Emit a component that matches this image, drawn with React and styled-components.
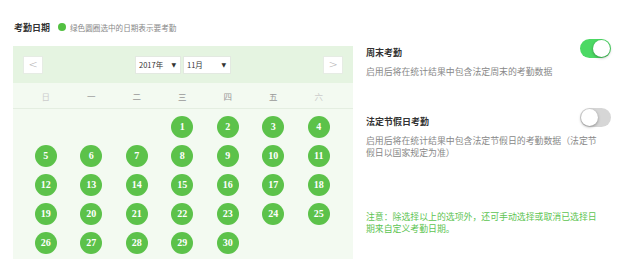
import React from 'react';
import styled, { createGlobalStyle } from 'styled-components';

const GlobalStyle = createGlobalStyle`
  body {
    margin: 0;
    background: #fff;
    font-family: "Noto Sans CJK SC", "Noto Sans", sans-serif;
  }
`;

const weekdays = ['日', '一', '二', '三', '四', '五', '六'];
const offset = 3;
const days = Array.from({ length: 30 }, (_, i) => i + 1);

function Toggle({ on }) {
  return (
    <Track $on={on}>
      <Knob $on={on} />
    </Track>
  );
}

function App() {
  return (
    <>
      <GlobalStyle />
      <Page>
        <LeftCol>
          <TitleRow>
            <Title>考勤日期</Title>
            <Dot />
            <Hint>绿色圆圈选中的日期表示要考勤</Hint>
          </TitleRow>
          <Calendar>
            <CalHeader>
              <NavBtn>&lt;</NavBtn>
              <Selects>
                <Select $w={46}>
                  <span>2017年</span>
                  <Caret>▼</Caret>
                </Select>
                <Select $w={48}>
                  <span>11月</span>
                  <Caret>▼</Caret>
                </Select>
              </Selects>
              <NavBtn>&gt;</NavBtn>
            </CalHeader>
            <WeekRow>
              {weekdays.map((w, i) => (
                <WeekCell key={w} $weekend={i === 0 || i === 6}>{w}</WeekCell>
              ))}
            </WeekRow>
            <DayGrid>
              {Array.from({ length: offset }).map((_, i) => <span key={'e' + i} />)}
              {days.map((d) => (
                <DayCell key={d}>
                  <Day>{d}</Day>
                </DayCell>
              ))}
            </DayGrid>
          </Calendar>
        </LeftCol>

        <RightCol>
          <Option>
            <OptionHead>
              <OptionTitle>周末考勤</OptionTitle>
              <Toggle on />
            </OptionHead>
            <Desc>启用后将在统计结果中包含法定周末的考勤数据</Desc>
          </Option>
          <Option $top={30}>
            <OptionHead>
              <OptionTitle>法定节假日考勤</OptionTitle>
              <Toggle />
            </OptionHead>
            <Desc>启用后将在统计结果中包含法定节假日的考勤数据（法定节假日以国家规定为准）</Desc>
          </Option>
          <Note>注意：除选择以上的选项外，还可手动选择或取消已选择日期来自定义考勤日期。</Note>
        </RightCol>
      </Page>
    </>
  );
}

const Page = styled.div`
  display: flex;
  align-items: flex-start;
  padding: 20px 11px 0 13px;
  width: 622px;
  box-sizing: border-box;
`;

const LeftCol = styled.div`
  width: 340px;
  flex-shrink: 0;
`;

const TitleRow = styled.div`
  display: flex;
  align-items: center;
  height: 14px;
  margin-bottom: 12px;
`;

const Title = styled.span`
  font-size: 9px;
  font-weight: bold;
  color: #333;
  margin-left: 1px;
`;

const Dot = styled.span`
  width: 8px;
  height: 8px;
  border-radius: 50%;
  background: #52c041;
  margin: 0 4px 0 8px;
`;

const Hint = styled.span`
  font-size: 7.6px;
  color: #888;
`;

const Calendar = styled.div`
  background: #f3faf1;
  padding-bottom: 2px;
`;

const CalHeader = styled.div`
  height: 37px;
  background: #e5f4e1;
  display: flex;
  align-items: center;
  justify-content: space-between;
  padding: 0 10px;
`;

const NavBtn = styled.div`
  width: 20px;
  height: 18px;
  background: #fff;
  border: 1px solid #e6ece4;
  box-sizing: border-box;
  display: flex;
  align-items: center;
  justify-content: center;
  color: #aaa;
  font-family: "DejaVu Sans", sans-serif;
  font-size: 11px;
  font-weight: 300;
`;

const Selects = styled.div`
  display: flex;
  gap: 2px;
`;

const Select = styled.div`
  width: ${(p) => p.$w}px;
  height: 18px;
  background: #fff;
  border: 1px solid #e3e9e1;
  box-sizing: border-box;
  display: flex;
  align-items: center;
  justify-content: space-between;
  padding: 0 4px 0 3px;
  font-size: 7.5px;
  color: #333;
`;

const Caret = styled.span`
  font-family: "DejaVu Sans", sans-serif;
  font-size: 6px;
  color: #333;
`;

const WeekRow = styled.div`
  display: grid;
  grid-template-columns: repeat(7, 45.5px);
  padding: 0 10px;
  height: 25px;
  align-items: center;
  border-bottom: 1px solid #e4eee1;
`;

const WeekCell = styled.span`
  text-align: center;
  font-size: 8.5px;
  color: ${(p) => (p.$weekend ? '#ccc' : '#999')};
`;

const DayGrid = styled.div`
  display: grid;
  grid-template-columns: repeat(7, 45.5px);
  grid-auto-rows: 29px;
  padding: 3px 10px 0;
`;

const DayCell = styled.div`
  display: flex;
  align-items: center;
  justify-content: center;
`;

const Day = styled.span`
  width: 22px;
  height: 22px;
  border-radius: 50%;
  background: #5cc24a;
  color: #fff;
  display: flex;
  align-items: center;
  justify-content: center;
  font-family: "Liberation Serif", serif;
  font-weight: bold;
  font-size: 10px;
`;

const RightCol = styled.div`
  margin-left: 13px;
  padding-top: 19px;
  flex: 1;
`;

const Option = styled.div`
  margin-top: ${(p) => p.$top || 0}px;
`;

const OptionHead = styled.div`
  display: flex;
  justify-content: space-between;
  align-items: flex-start;
`;

const OptionTitle = styled.span`
  font-size: 9px;
  font-weight: bold;
  color: #333;
  line-height: 12px;
  margin-top: 8px;
`;

const Desc = styled.p`
  margin: 7px 0 0;
  font-size: 8.9px;
  line-height: 12px;
  color: #888;
  width: 236px;
`;

const Note = styled.p`
  margin: 52px 0 0;
  font-size: 8.9px;
  line-height: 12px;
  color: #5dc452;
  width: 236px;
`;

const Track = styled.div`
  position: relative;
  width: 31px;
  height: 19px;
  border-radius: 10px;
  background: ${(p) => (p.$on ? '#4cd964' : '#d6d6d6')};
  flex-shrink: 0;
`;

const Knob = styled.span`
  position: absolute;
  top: 1px;
  left: ${(p) => (p.$on ? '13px' : '1px')};
  width: 17px;
  height: 17px;
  border-radius: 50%;
  background: #fff;
  box-shadow: 0 1px 3px rgba(0, 0, 0, 0.35);
`;

export default App;
